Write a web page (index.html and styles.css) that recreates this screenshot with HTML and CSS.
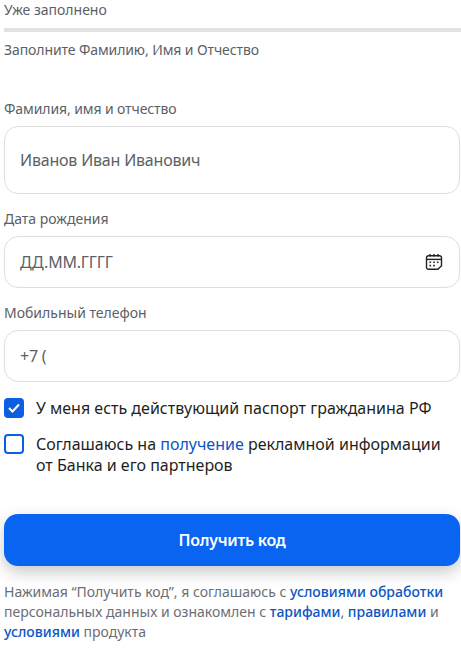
FILE: index.html
```html
<!DOCTYPE html>
<html lang="ru">
<head>
  <meta charset="UTF-8">
  <title>Получить код</title>
  <link rel="stylesheet" href="styles.css">
</head>
<body>
  <div class="container">
    <div class="progress-title">Уже заполнено</div>
    <div class="progress-bar"></div>
    <div class="progress-hint">Заполните Фамилию, Имя и Отчество</div>

    <form class="form">
      <label class="field-label label-tight" for="fio">Фамилия, имя и отчество</label>
      <div class="field field-tall">
        <input class="field-input" type="text" id="fio" placeholder="Иванов Иван Иванович">
      </div>

      <label class="field-label" for="birth">Дата рождения</label>
      <div class="field">
        <input class="field-input" type="text" id="birth" placeholder="ДД.ММ.ГГГГ">
        <svg class="calendar" width="18" height="18" viewBox="0 0 18 18" fill="none" stroke="#222" stroke-width="1.4">
          <path d="M3.5 2.7h11a2 2 0 0 1 2 2v8l-3.6 3.6H3.5a2 2 0 0 1-2-2V4.7a2 2 0 0 1 2-2z"/>
          <path d="M1.5 6.4h15"/>
          <path d="M5 1v2.6M9 1v2.6M13 1v2.6"/>
          <path stroke-width="1.6" d="M4.5 9.2h1.6M8.2 9.2h1.6M11.9 9.2h1.6M4.5 12.6h1.6M8.2 12.6h1.6"/>
        </svg>
      </div>

      <label class="field-label" for="phone">Мобильный телефон</label>
      <div class="field">
        <input class="field-input" type="text" id="phone" value="+7 (">
      </div>

      <div class="check-row">
        <span class="check check-on">
          <svg width="12" height="10" viewBox="0 0 12 10" fill="none" stroke="#fff" stroke-width="2">
            <path d="M1 5l3.5 3.5L11 1.5"/>
          </svg>
        </span>
        <span class="check-text">У меня есть действующий паспорт гражданина РФ</span>
      </div>
      <div class="check-row check-next">
        <span class="check"></span>
        <span class="check-text">Соглашаюсь на <a href="#">получение</a> рекламной информации от Банка и его партнеров</span>
      </div>

      <button class="submit" type="button">Получить код</button>
    </form>

    <p class="legal">Нажимая “Получить код”, я соглашаюсь с <a href="#">условиями обработки</a> персональных данных и ознакомлен с <a href="#">тарифами</a>, <a href="#">правилами</a> и <a href="#">условиями</a> продукта</p>
  </div>
</body>
</html>
```

FILE: styles.css
```css
* { box-sizing: border-box; }
html, body { margin: 0; padding: 0; background: #fff; }
body { font-family: "Noto Sans", "Open Sans", sans-serif; color: #1f1f1f; }
a { color: #0b55c4; text-decoration: none; }

.container { padding: 0 1px 0 4px; height: 652px; overflow: hidden; }

.progress-title { font-size: 14px; line-height: 20px; color: #5c5f66; }
.progress-bar { height: 4px; margin-top: 8px; margin-right: -1px; background: #e2e2e2; }
.progress-hint { font-size: 14px; line-height: 20px; margin-top: 8px; color: #5c5f66; letter-spacing: -0.1px; }

.form { margin-top: 39px; }
.field-label { display: block; font-size: 14px; line-height: 20px; color: #5c5f66; margin-bottom: 7px; }
.label-tight { letter-spacing: -0.1px; }
.field { display: flex; align-items: center; height: 52px; padding: 0 16px 0 15px; margin-bottom: 15px; border: 1px solid #dedede; border-radius: 14px; background: #fff; }
.field-tall { height: 68px; }
.field-input { flex: 1; min-width: 0; border: 0; outline: 0; padding: 0; background: none; font: inherit; font-size: 16px; letter-spacing: -0.2px; color: #5c5f66; }
.field-input::placeholder { color: #5c5f66; opacity: 1; }

.check-row { display: flex; gap: 12px; margin-top: 16px; }
.check-next { margin-top: 15px; }
.check { flex: none; display: flex; align-items: center; justify-content: center; width: 20px; height: 20px; border: 2px solid #0b5fe0; border-radius: 4px; }
.check-on { background: #0b5fe0; }
.check-text { font-size: 16px; line-height: 21px; color: #1f1f1f; }

.submit { display: block; width: 100%; height: 52px; margin-top: 38px; border: 0; border-radius: 14px; background: #0a64f2; color: #fff; font: inherit; font-size: 16px; font-weight: 600; letter-spacing: -0.3px; box-shadow: 0 6px 16px rgba(0, 0, 0, 0.22); }

.legal { margin: 16px 0 0; font-size: 14px; line-height: 20px; color: #6b6e75; }
.legal a { font-weight: 500; }
```
